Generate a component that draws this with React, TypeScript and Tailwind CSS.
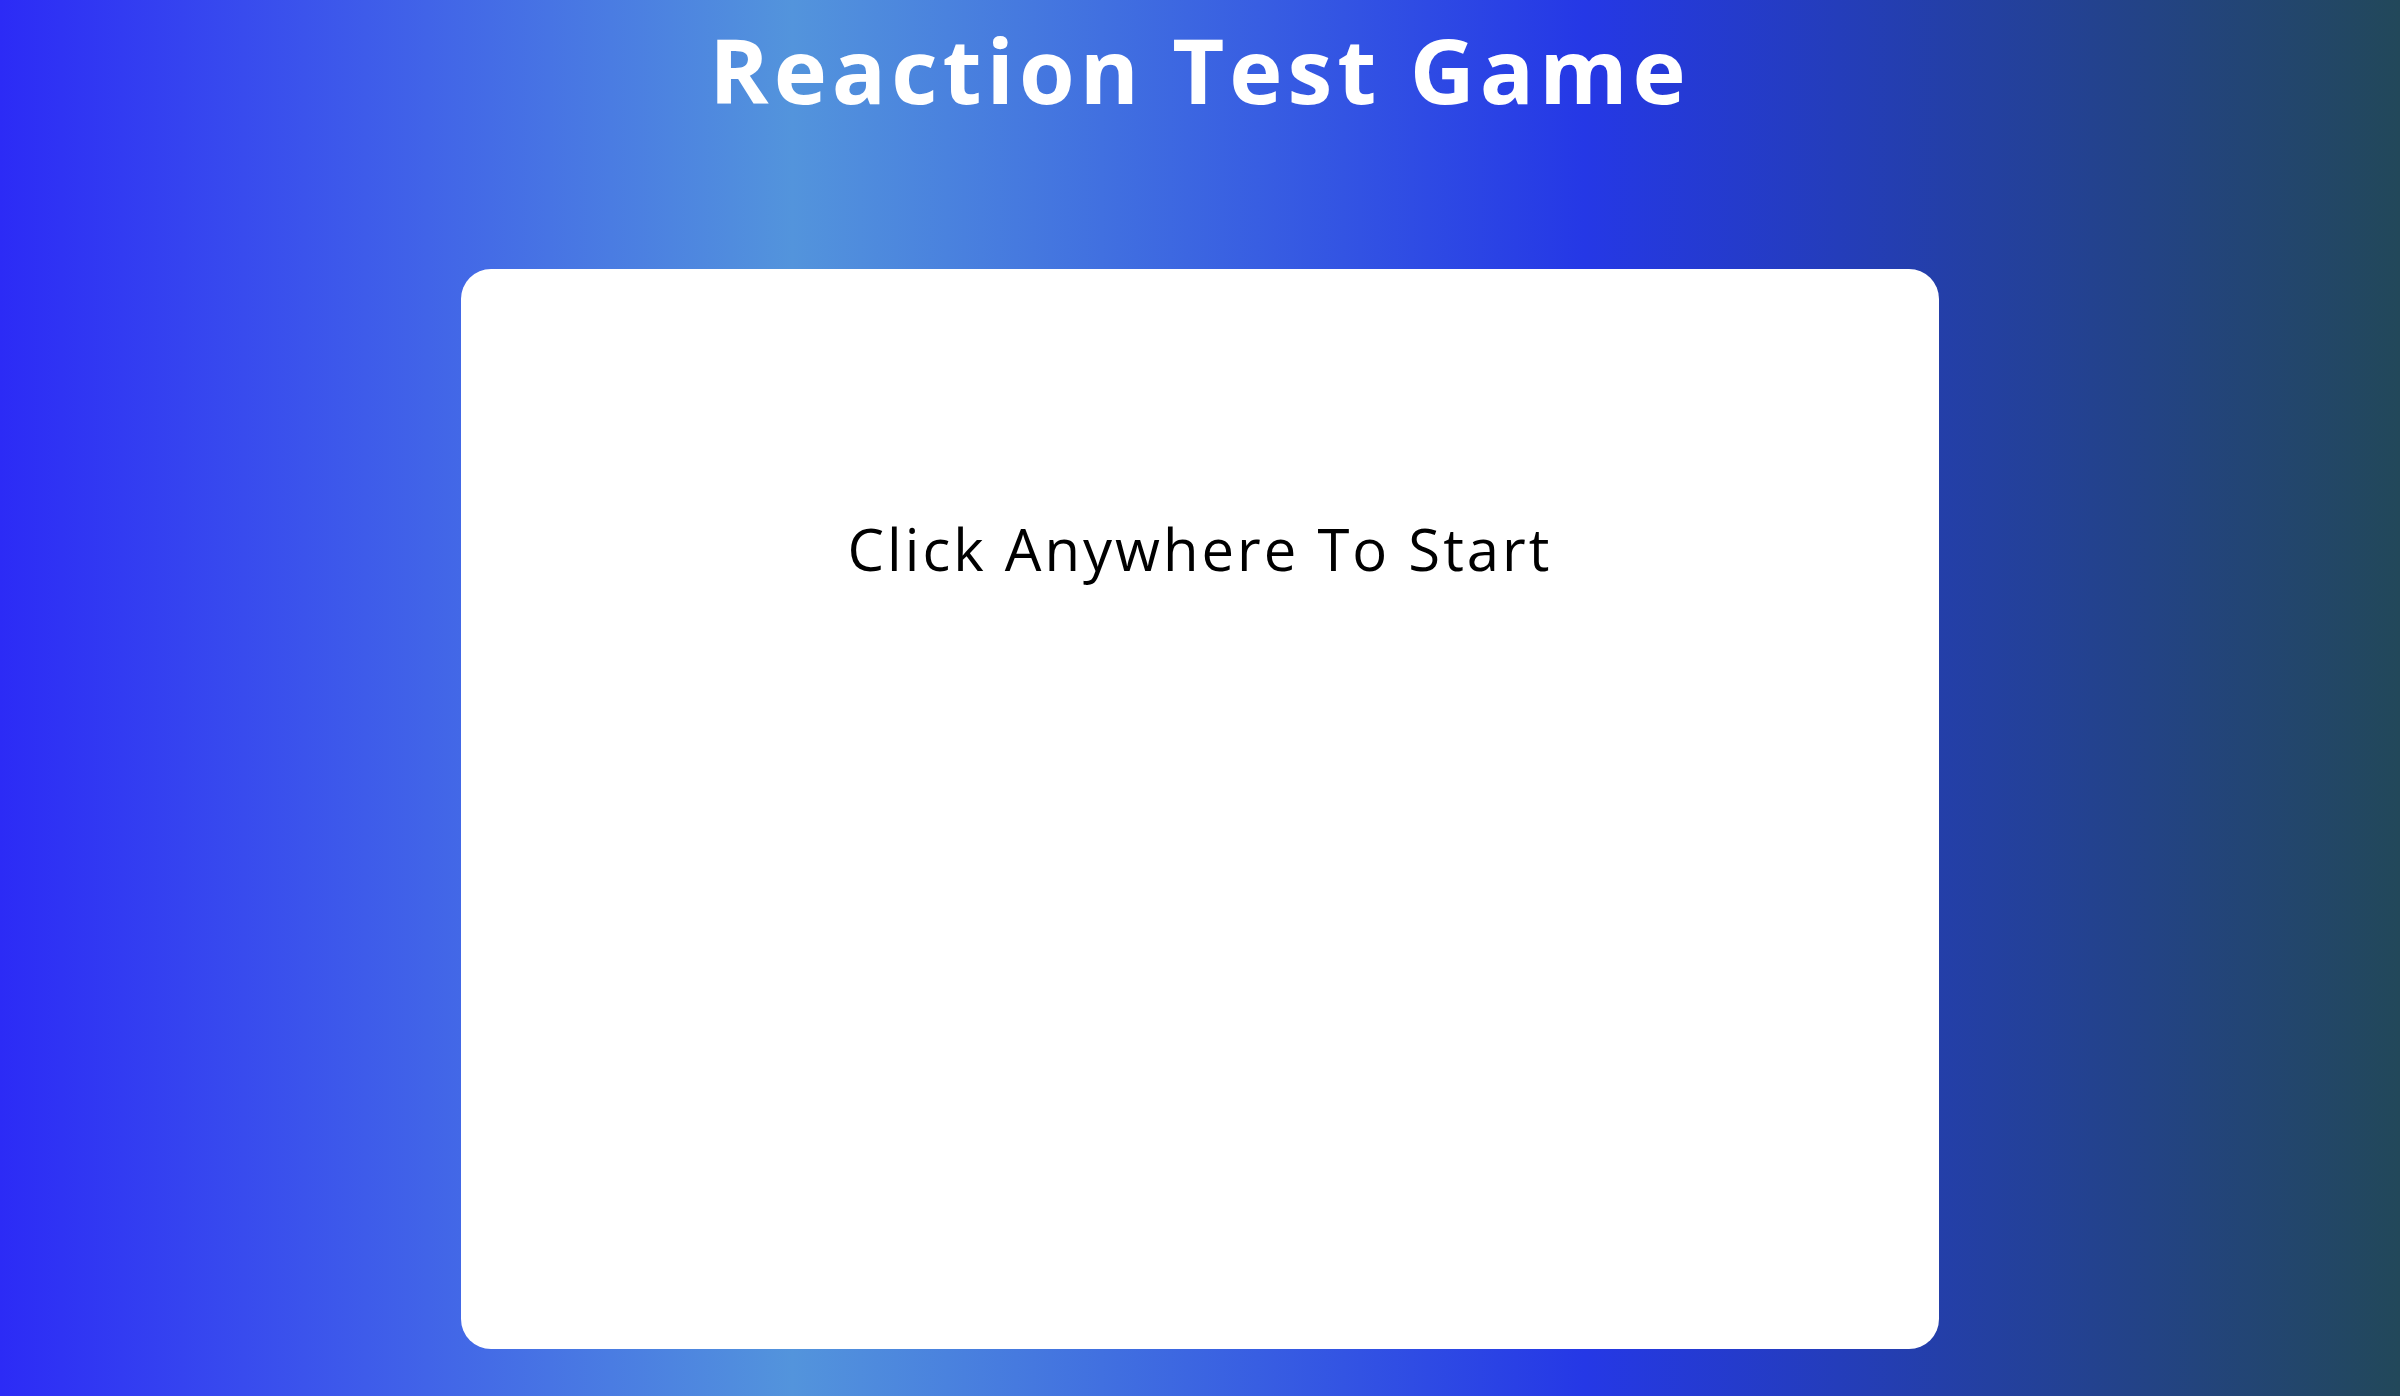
export default function App() {
  return (
    <div
      className="flex h-[1396px] w-full flex-col items-center overflow-hidden bg-[linear-gradient(to_right,#2c2bf6_0%,#5394dc_33%,#2538e6_66%,#22485a_100%)]"
      style={{ fontFamily: '"Open Sans", "Liberation Sans", sans-serif' }}
    >
      <h1 className="mt-[18px] text-[90px] font-bold leading-[1.15] tracking-[5px] text-white">
        Reaction Test Game
      </h1>
      <div className="mt-[147px] flex h-[1080px] w-[1478px] cursor-pointer justify-center rounded-[30px] bg-white pt-[245px]">
        <p className="h-fit text-[58px] leading-[1.2] tracking-[3px] text-black">Click Anywhere To Start</p>
      </div>
    </div>
  );
}
